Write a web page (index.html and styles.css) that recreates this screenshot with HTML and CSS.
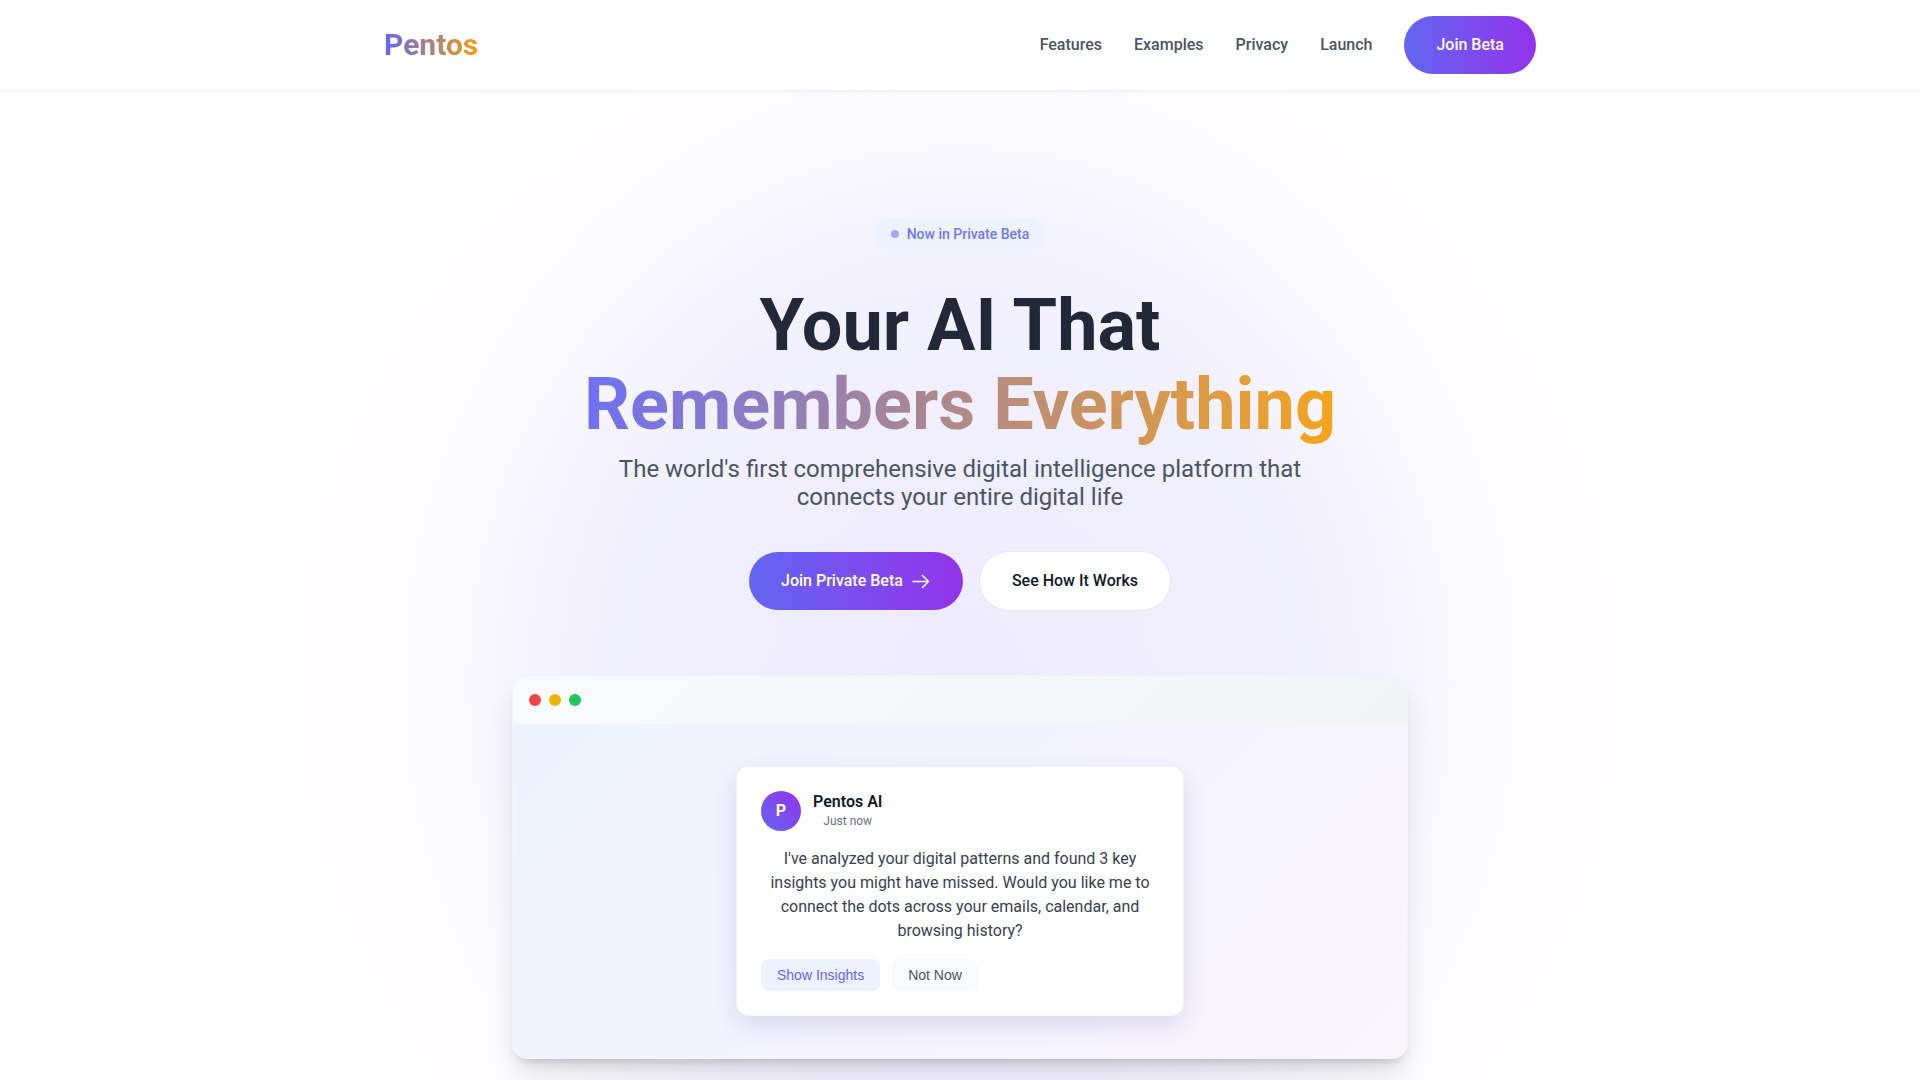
FILE: index.html
```html
<!DOCTYPE html>
<html lang="en">
<head>
  <meta charset="utf-8">
  <meta name="viewport" content="width=device-width, initial-scale=1">
  <title>Pentos</title>
  <link rel="stylesheet" href="styles.css">
</head>
<body>
  <header class="site-header">
    <nav class="nav">
      <a class="logo gradient-text" href="#">Pentos</a>
      <div class="nav-links">
        <a class="nav-link" href="#features">Features</a>
        <a class="nav-link" href="#examples">Examples</a>
        <a class="nav-link" href="#privacy">Privacy</a>
        <a class="nav-link" href="#launch">Launch</a>
        <a class="btn btn-primary" href="#beta">Join Beta</a>
      </div>
    </nav>
  </header>
  <main class="hero">
    <div class="badge"><span class="badge-dot"></span>Now in Private Beta</div>
    <h1 class="title">Your AI That<br><span class="gradient-text">Remembers Everything</span></h1>
    <p class="subtitle">The world's first comprehensive digital intelligence platform that connects your entire digital life</p>
    <div class="actions">
      <a class="btn btn-primary" href="#beta">Join Private Beta
        <svg class="arrow" viewBox="0 0 20 20" aria-hidden="true"><path d="M2 10.500h15.500M11.500 4.500l6 6-6 6"/></svg>
      </a>
      <a class="btn btn-secondary" href="#examples">See How It Works</a>
    </div>
    <section class="window">
      <div class="window-bar">
        <span class="dot dot-red"></span>
        <span class="dot dot-yellow"></span>
        <span class="dot dot-green"></span>
      </div>
      <div class="window-body">
        <article class="card">
          <div class="card-head">
            <div class="avatar">P</div>
            <div class="who">
              <div class="name">Pentos AI</div>
              <div class="time">Just now</div>
            </div>
          </div>
          <p class="message">I've analyzed your digital patterns and found 3 key insights you might have missed. Would you like me to connect the dots across your emails, calendar, and browsing history?</p>
          <div class="card-actions">
            <button class="chip chip-primary" type="button">Show Insights</button>
            <button class="chip" type="button">Not Now</button>
          </div>
        </article>
      </div>
    </section>
  </main>
</body>
</html>
```

FILE: styles.css
```css
*,
*::before,
*::after {
  box-sizing: border-box;
}

body {
  margin: 0;
  background: #fff;
  color: #111827;
  font-family: Roboto, "Liberation Sans", sans-serif;
  font-size: 16px;
  line-height: 24px;
}

h1,
p {
  margin: 0;
}

a {
  color: inherit;
  text-decoration: none;
}

.gradient-text {
  background: linear-gradient(90deg, #6366f1, #f59e0b);
  background-clip: text;
  -webkit-background-clip: text;
  color: transparent;
}

.site-header {
  position: sticky;
  top: 0;
  z-index: 1;
  background: #fff;
  border-bottom: 1px solid #f3f4f6;
  box-shadow: 0 1px 2px rgba(0, 0, 0, 0.05);
}

.nav {
  display: flex;
  align-items: center;
  justify-content: space-between;
  max-width: 1200px;
  margin: 0 auto;
  padding: 16px 24px;
}

.logo {
  font-size: 30px;
  line-height: 36px;
  font-weight: 700;
}

.nav-links {
  display: flex;
  align-items: center;
  gap: 32px;
}

.nav-link {
  color: #4b5563;
  font-weight: 500;
}

.btn {
  display: inline-flex;
  align-items: center;
  gap: 8px;
  padding: 17px 32px;
  border-radius: 32px;
  font-weight: 500;
}

.btn-primary {
  background: linear-gradient(90deg, #6366f1, #9333ea);
  color: #fff;
}

.btn-secondary {
  background: #fff;
  border: 1px solid #e5e7eb;
}

.arrow {
  width: 20px;
  height: 20px;
  fill: none;
  stroke: currentColor;
  stroke-width: 1.5;
  stroke-linecap: round;
  stroke-linejoin: round;
}

.hero {
  display: flex;
  flex-direction: column;
  align-items: center;
  padding: 128px 24px 96px;
  text-align: center;
  background:
    radial-gradient(ellipse 560px 630px at 50% 590px, rgba(105, 92, 241, 0.06), rgba(105, 92, 241, 0.05) 65%, rgba(105, 92, 241, 0)),
    radial-gradient(circle 790px at 50% 590px, rgba(105, 92, 241, 0.07), rgba(105, 92, 241, 0));
}

.badge {
  display: flex;
  align-items: center;
  gap: 8px;
  padding: 6px 16px;
  border-radius: 15px;
  background: #edf2ff;
  color: #7577f2;
  font-size: 14px;
  line-height: 18px;
  font-weight: 500;
}

.badge-dot {
  width: 8px;
  height: 8px;
  border-radius: 50%;
  background: #a5a6f6;
}

.title {
  margin-top: 37px;
  font-size: 72px;
  line-height: 79px;
  font-weight: 700;
  opacity: 0.92;
}

.subtitle {
  max-width: 700px;
  margin-top: 11px;
  color: #4b5563;
  font-size: 24px;
  line-height: 28px;
}

.actions {
  display: flex;
  align-items: center;
  gap: 16px;
  margin-top: 40px;
}

.window {
  width: 100%;
  max-width: 896px;
  margin-top: 64px;
  overflow: hidden;
  border: 1px solid #f3f4f6;
  border-radius: 16px;
  box-shadow:
    0 20px 32px -4px rgba(0, 0, 0, 0.1),
    0 8px 12px -6px rgba(0, 0, 0, 0.2);
}

.window-bar {
  display: flex;
  gap: 8px;
  padding: 18px 16px;
  background: linear-gradient(135deg, #f9fafb, #f3f4f6);
}

.dot {
  width: 12px;
  height: 12px;
  border-radius: 50%;
}

.dot-red {
  background: #ef4444;
}

.dot-yellow {
  background: #eab308;
}

.dot-green {
  background: #22c55e;
}

.window-body {
  padding: 42px 24px;
  background: linear-gradient(135deg, #eef2ff, #faf5ff);
}

.card {
  max-width: 448px;
  margin: 0 auto;
  padding: 24px;
  background: #fff;
  border: 1px solid #f3f4f6;
  border-radius: 12px;
  box-shadow: 0 10px 24px rgba(30, 27, 75, 0.12);
}

.card-head {
  display: flex;
  align-items: center;
  gap: 12px;
}

.avatar {
  display: flex;
  align-items: center;
  justify-content: center;
  width: 40px;
  height: 40px;
  border-radius: 50%;
  background: linear-gradient(45deg, #6366f1, #9333ea);
  color: #fff;
  font-weight: 700;
}

.name {
  line-height: 20px;
  font-weight: 600;
}

.time {
  color: #6b7280;
  font-size: 12px;
  line-height: 18px;
}

.message {
  margin: 16px 0;
  color: #374151;
}

.card-actions {
  display: flex;
  gap: 12px;
}

.chip {
  padding: 8px 16px;
  border: 0;
  border-radius: 8px;
  background: #f9fafb;
  color: #4b5563;
  font-family: "Liberation Sans", Arial, sans-serif;
  font-size: 14px;
  line-height: 16px;
}

.chip-primary {
  background: #eef2ff;
  color: #6366f1;
}
```
